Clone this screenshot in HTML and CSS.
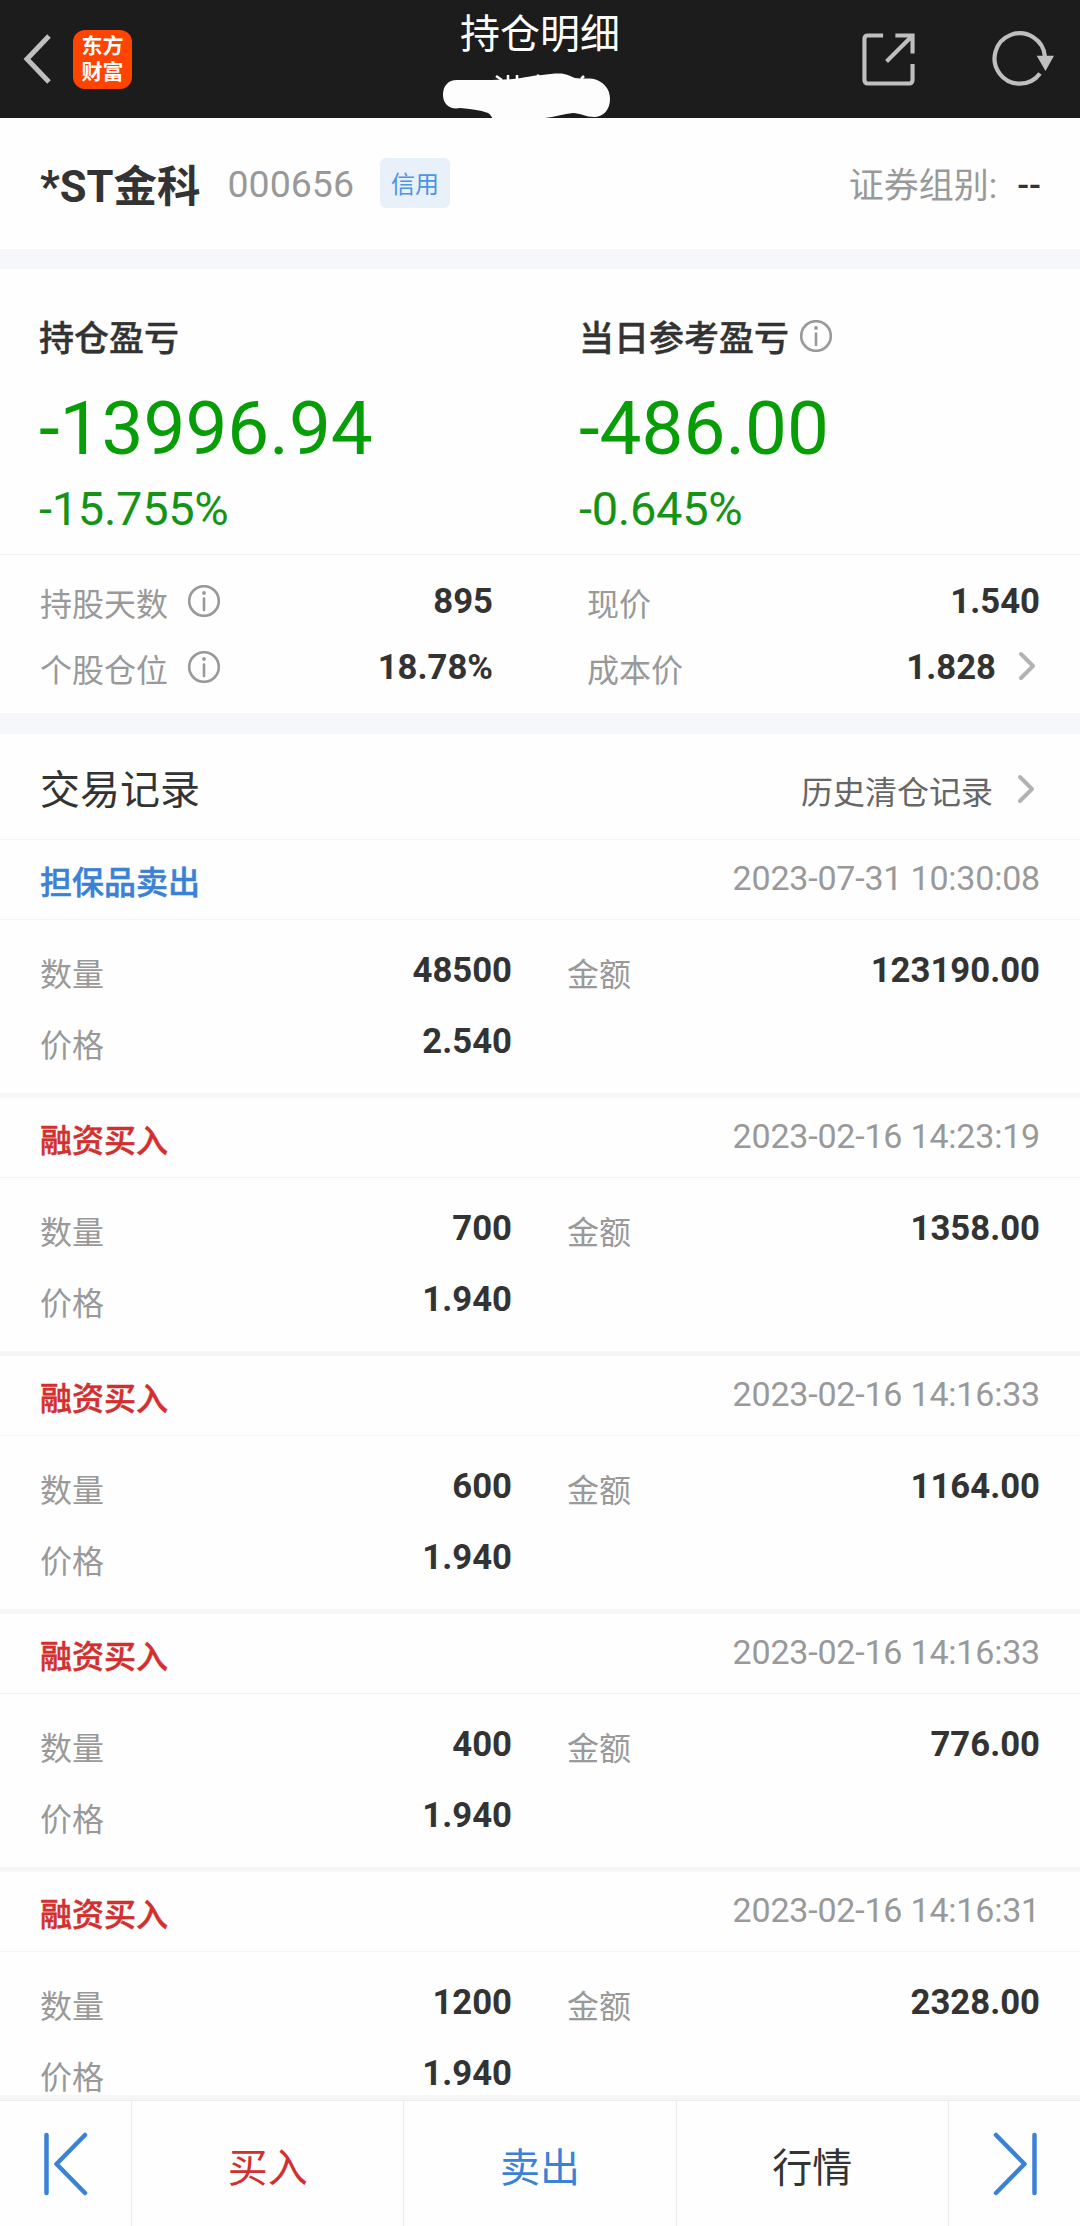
FILE: index.html
```html
<!DOCTYPE html>
<html lang="zh-CN">
<head>
  <meta charset="UTF-8" />
  <meta name="viewport" content="width=device-width, initial-scale=1.0" />
  <title>持仓明细</title>
  <link rel="stylesheet" href="styles.css">
</head>
<body>
  <!-- HEADER -->
  <header class="header">
    <div class="header-left">
      <svg class="back" width="32" height="56" viewBox="0 0 32 56"><path d="M28 5L6 28L28 51" /></svg>
      <div class="logo"><span>东方</span><span>财富</span></div>
    </div>
    <h1>持仓明细</h1>
    <div class="header-right">
      <svg width="53" height="53" viewBox="0 0 54 54"><path d="M21.500 2.500H6Q2.500 2.500 2.500 6V48Q2.500 51.500 6 51.500H48Q51.500 51.500 51.500 48V31.500M34 2.500H51.500V21M51 3L25 29" /></svg>
      <svg width="64" height="58" viewBox="0 0 64 58"><path d="M49 43.500A25.200 25.200 0 1 1 53.900 26.500" /><path class="fill" d="M45.700 25.700H63L54.500 41Z" /></svg>
    </div>
    <svg class="blob" width="170" height="50" viewBox="0 0 170 50"><path d="M1 22C1 13 6 7 15 7C36 7 54 7 71 6C82 5 92 2 100 2C108 1 117 0 122 1C128 2 129 4 133 5C140 6 147 5 152 6C162 9 168 16 168 26C168 37 161 44 152 44C144 44 138 40 131 40C122 41 112 44 103 45C90 47 80 48 68 48C60 49 54 49 51 46C49 43 49 42 46 40C38 37 28 36 18 35C8 37 1 31 1 22Z" /><path class="mark" d="M54 3L60 7M66 2V7M75 2V7M96 1.500V4M142 3L139 6" /></svg>
  </header>

  <!-- STOCK -->
  <section class="stock">
    <span class="stock-name">*ST金科</span>
    <span class="stock-code">000656</span>
    <span class="tag">信用</span>
    <span class="group">证券组别:</span>
    <span class="group-value">--</span>
  </section>

  <!-- PROFIT -->
  <section class="profit">
    <div class="profit-col">
      <h2>持仓盈亏</h2>
      <div class="big">-13996.94</div>
      <div class="pct">-15.755%</div>
    </div>
    <div class="profit-col">
      <h2>当日参考盈亏 <svg class="info" viewBox="0 0 32 32"><circle cx="16" cy="16" r="14.800" /><path d="M16 13.500V25" /><circle class="dot" cx="16" cy="8" r="1.900" /></svg></h2>
      <div class="big">-486.00</div>
      <div class="pct">-0.645%</div>
    </div>
  </section>
  <section class="stats">
    <div class="stat">
      <span class="label">持股天数</span>
      <svg class="info" viewBox="0 0 32 32"><circle cx="16" cy="16" r="14.800" /><path d="M16 13.500V25" /><circle class="dot" cx="16" cy="8" r="1.900" /></svg>
      <b>895</b>
    </div>
    <div class="stat">
      <span class="label">现价</span>
      <b>1.540</b>
    </div>
    <div class="stat">
      <span class="label">个股仓位</span>
      <svg class="info" viewBox="0 0 32 32"><circle cx="16" cy="16" r="14.800" /><path d="M16 13.500V25" /><circle class="dot" cx="16" cy="8" r="1.900" /></svg>
      <b>18.78%</b>
    </div>
    <div class="stat">
      <span class="label">成本价</span>
      <b>1.828</b>
      <svg class="arrow" viewBox="0 0 18 30"><path d="M3 3L15 15L3 27" /></svg>
    </div>
  </section>

  <!-- RECORDS -->
  <section class="records">
    <div class="records-head">
      <h3>交易记录</h3>
      <span>历史清仓记录</span>
      <svg class="arrow" viewBox="0 0 18 30"><path d="M3 3L15 15L3 27" /></svg>
    </div>

    <div class="record">
      <div class="record-head"><span class="type sell">担保品卖出</span><time>2023-07-31 10:30:08</time></div>
      <div class="record-body">
        <div class="cell"><span class="label">数量</span><b>48500</b></div>
        <div class="cell"><span class="label">金额</span><b>123190.00</b></div>
        <div class="cell"><span class="label">价格</span><b>2.540</b></div>
      </div>
    </div>

    <div class="record">
      <div class="record-head"><span class="type buy">融资买入</span><time>2023-02-16 14:23:19</time></div>
      <div class="record-body">
        <div class="cell"><span class="label">数量</span><b>700</b></div>
        <div class="cell"><span class="label">金额</span><b>1358.00</b></div>
        <div class="cell"><span class="label">价格</span><b>1.940</b></div>
      </div>
    </div>

    <div class="record">
      <div class="record-head"><span class="type buy">融资买入</span><time>2023-02-16 14:16:33</time></div>
      <div class="record-body">
        <div class="cell"><span class="label">数量</span><b>600</b></div>
        <div class="cell"><span class="label">金额</span><b>1164.00</b></div>
        <div class="cell"><span class="label">价格</span><b>1.940</b></div>
      </div>
    </div>

    <div class="record">
      <div class="record-head"><span class="type buy">融资买入</span><time>2023-02-16 14:16:33</time></div>
      <div class="record-body">
        <div class="cell"><span class="label">数量</span><b>400</b></div>
        <div class="cell"><span class="label">金额</span><b>776.00</b></div>
        <div class="cell"><span class="label">价格</span><b>1.940</b></div>
      </div>
    </div>

    <div class="record">
      <div class="record-head"><span class="type buy">融资买入</span><time>2023-02-16 14:16:31</time></div>
      <div class="record-body">
        <div class="cell"><span class="label">数量</span><b>1200</b></div>
        <div class="cell"><span class="label">金额</span><b>2328.00</b></div>
        <div class="cell"><span class="label">价格</span><b>1.940</b></div>
      </div>
    </div>
  </section>

  <!-- BOTTOM BAR -->
  <nav class="bottom-bar">
    <a class="step"><svg width="48" height="66" viewBox="0 0 48 66"><path d="M6.500 4V62M45 4L16.500 33L45 62" /></svg></a>
    <a class="buy">买入</a>
    <a class="sell">卖出</a>
    <a>行情</a>
    <a class="step"><svg width="48" height="66" viewBox="0 0 48 66"><path d="M41.500 4V62M3 4L31.500 33L3 62" /></svg></a>
  </nav>
</body>
</html>
```
FILE: styles.css
```css
*{box-sizing:border-box}
body{margin:0;width:1080px;height:2226px;overflow:hidden;display:flex;flex-direction:column;background:#fefefe;color:#333;font-family:Roboto,"Noto Sans CJK SC",sans-serif}
h1,h2,h3{margin:0}
svg{fill:none;flex:none}

.header{height:118px;flex:none;background:#1c1c1c;position:relative;display:grid;grid-template-columns:1fr auto 1fr;padding:0 25px 0 21px}
.header svg{stroke:#bfbfbf;stroke-width:4.200}
.header .back{stroke-width:5}
.header .fill{fill:#bfbfbf;stroke:none}
.header-left,.header-right{display:flex;align-items:center}
.header-left{gap:20px}
.header-right{justify-content:flex-end;gap:76px}
.header h1{color:#fff;font-size:40px;font-weight:400;line-height:70px;padding-left:4px}
.logo{width:59px;height:59px;border-radius:12px;background:#ff4400;color:#fff;font-size:21px;font-weight:700;line-height:26px;padding-top:3px;display:flex;flex-direction:column;align-items:center}
.header .blob{position:absolute;left:442px;top:73px;stroke:none;fill:#fdfdfd}
.header .mark{stroke:#fdfdfd;stroke-width:2.500}

.stock{height:131px;flex:none;display:flex;align-items:center;padding:0 39px 0 40px;line-height:60px}
.stock-name{font-size:43.500px;font-weight:700;padding-top:8px}
.stock-code{font-size:37.500px;color:#999;margin-left:27px;padding-top:1px}
.tag{font-size:24px;line-height:54px;height:50px;padding:0 11px;margin:0 0 2px 26px;background:#e8f0f9;color:#4a95e6;border-radius:6px}
.group{font-size:35px;color:#999;margin-left:auto;padding-top:7px}
.group-value{font-size:35px;font-weight:500;margin-left:20px;padding-top:5px}

.profit{border-top:20px solid #f5f7fa;height:306px;flex:none;display:grid;grid-template-columns:1fr 1fr;border-bottom:1px solid #f3f3f3}
.profit-col{padding:46px 0 0 39px}
.profit h2{font-size:35px;font-weight:500;line-height:50px;display:flex;align-items:center;gap:11px;-webkit-text-stroke:.4px currentColor}
.profit h2 .info{margin-bottom:8px}
.big{font-size:74.600px;line-height:90px;margin-top:19px;color:#079d07}
.pct{font-size:47px;line-height:60px;margin-top:5px;color:#159315;letter-spacing:-.3px}
.info{width:32px;height:32px;stroke:#999;stroke-width:2.600;stroke-linecap:round}
.info .dot{fill:#999;stroke:none}
.label{font-size:32px;color:#999}
b{font-size:34.700px;font-weight:700;margin-left:auto}

.stats{height:158px;flex:none;display:grid;grid-template-columns:453px 453px;column-gap:94px;grid-auto-rows:66px;padding:13px 40px 0}
.stat{display:flex;align-items:center;line-height:66px}
.stat .label{padding-top:8px}
.stat .info{margin-left:20px}
.arrow{width:18px;height:30px;stroke:#b3b3b3;stroke-width:4;stroke-linecap:round;stroke-linejoin:round}
.stat .arrow{margin:0 4px 3px 22px}

.records{flex:1;min-height:0;overflow:hidden;border-top:21px solid #f5f7fa}
.records-head{height:106px;display:flex;align-items:center;padding:0 45px 0 40px;border-bottom:1px solid #f3f3f3}
.records-head h3{font-size:40px;font-weight:400;margin-right:auto}
.records-head span{font-size:32px;color:#666;padding-top:6px}
.records-head .arrow{margin:4px 0 0 24px}
.record{height:258px;border-bottom:5px solid #f6f6f7}
.record-head{height:80px;display:flex;justify-content:space-between;padding:0 40px;border-bottom:1px solid #f3f3f3;line-height:76px}
.type{font-size:32px;font-weight:500;padding-top:5px;-webkit-text-stroke:.5px currentColor}
time{font-size:34px;color:#999;letter-spacing:-.2px}
.record-body{display:grid;grid-template-columns:472px 473px;column-gap:55px;grid-auto-rows:71px;padding:15px 40px 0}
.cell{display:flex;line-height:71px}
.cell .label{padding-top:5px}
.buy{color:#d32f2f}
.sell{color:#3b82d6}

.bottom-bar{height:131px;flex:none;border-top:5px solid #f6f6f7;display:grid;grid-template-columns:132px 1fr 1fr 1fr 131px;font-size:40px}
.bottom-bar a{display:flex;align-items:center;justify-content:center;border-top:1px solid #ebebeb;border-right:1px solid #ebebeb;padding-top:2px}
.bottom-bar a:last-child{border-right:0}
.bottom-bar .step{padding:0 3px 0 0}
.bottom-bar .step:last-child{padding:0 0 0 4px}
.step svg{stroke:#3b82d6;stroke-width:4.500;stroke-linecap:round;stroke-linejoin:round}
```
